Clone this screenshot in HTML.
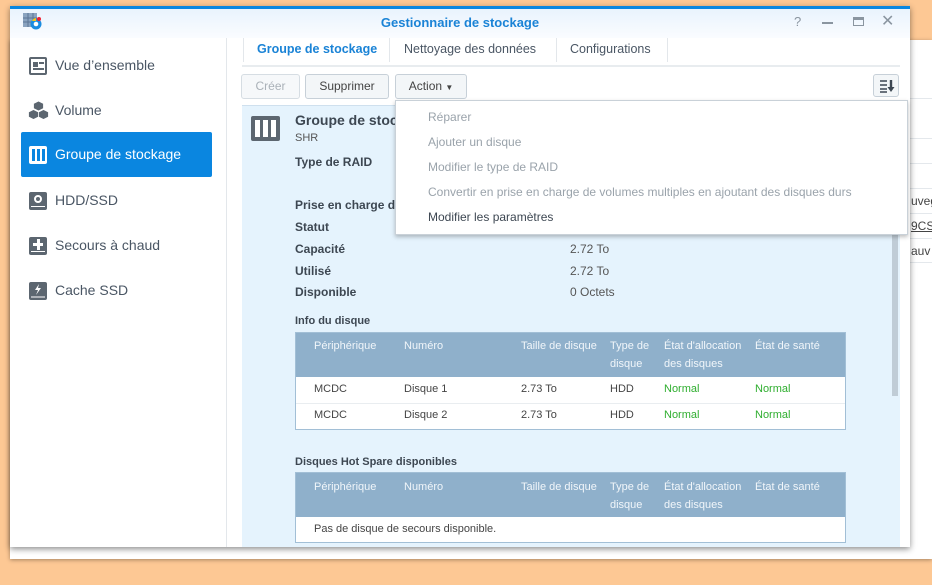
<!DOCTYPE html>
<html><head><meta charset="utf-8"><style>
*{box-sizing:border-box;margin:0;padding:0}
body{width:932px;height:585px;background:#fdc894;position:relative;overflow:hidden;font-family:"Liberation Sans",sans-serif;font-size:12px;color:#333}
.abs{position:absolute;white-space:nowrap}
#back{left:10px;top:40px;width:922px;height:519px;background:#fff;box-shadow:0 1px 4px rgba(0,0,0,.35)}
#win{left:10px;top:6px;width:900px;height:541px;background:#fff;box-shadow:0 2px 6px rgba(0,0,0,.45)}
#title{left:0;top:0;width:900px;height:32px;background:linear-gradient(#e9f3fd,#fafcff);border-top:3px solid #0a86e0}
.nav{left:11px;width:191px;height:45px;font-size:14px;color:#4a5664;line-height:45px;padding-left:34px}
.nav .ic{position:absolute;left:8px;top:14px;width:18px;height:18px;background:#5c6670;border-radius:2px}
.lbl{font-weight:bold;color:#3d4752;font-size:12px}
.val{color:#555;font-size:12px}
.tb{background:#fff;border:1px solid #a2bfd6}
.th{background:#8fb0cb;color:#f1f6fa}
.dd{color:#9aa3ab;font-size:12px}
.hd{color:#f1f6fa;font-size:11px;line-height:18px}
</style></head><body>
<div id="back" class="abs">
 <div class="abs" style="left:900px;top:58px;width:22px;height:1px;background:#e4e8ec"></div>
 <div class="abs" style="left:900px;top:98px;width:22px;height:1px;background:#e4e8ec"></div>
 <div class="abs" style="left:900px;top:123px;width:22px;height:1px;background:#e4e8ec"></div>
 <div class="abs" style="left:900px;top:148px;width:22px;height:1px;background:#e4e8ec"></div>
 <div class="abs" style="left:900px;top:173px;width:22px;height:1px;background:#e4e8ec"></div>
 <div class="abs" style="left:900px;top:198px;width:22px;height:1px;background:#e4e8ec"></div>
 <div class="abs" style="left:900px;top:222px;width:22px;height:1px;background:#e4e8ec"></div>
 <div class="abs" style="left:901px;top:154px;font-size:12px;color:#444">uveg</div>
 <div class="abs" style="left:901px;top:179px;font-size:12px;color:#444;text-decoration:underline">9CS</div>
 <div class="abs" style="left:901px;top:204px;font-size:12px;color:#444">auv</div>
</div>
<div id="win" class="abs">
 <div id="title" class="abs"></div>
 <svg class="abs" style="left:12px;top:5px" width="22" height="20"><rect x="1" y="2" width="14" height="14" fill="#8aa3bf"/><path d="M1 7h14M1 11h14M6 2v14M11 2v14" stroke="#5b7594" stroke-width="1"/><circle cx="14" cy="13" r="5.5" fill="#1a8ce0"/><circle cx="14" cy="13" r="2.3" fill="#fff"/><path d="M10 10a5 5 0 0 1 4-3v3z" fill="#f5c518"/><circle cx="17" cy="8" r="2" fill="#e23"/></svg>
 <div class="abs" style="left:0;width:900px;top:9px;text-align:center;font-weight:bold;color:#1a83d6;font-size:13px">Gestionnaire de stockage</div>
 <div class="abs" style="left:784px;top:8px;color:#8a95a0;font-size:13px">?</div>
 <div class="abs" style="left:812px;top:16px;width:11px;height:2px;background:#8a95a0"></div>
 <div class="abs" style="left:843px;top:11px;width:11px;height:9px;border:1.5px solid #8a95a0;border-top-width:3px"></div>
 <div class="abs" style="left:871px;top:5px;color:#8a95a0;font-size:16px">✕</div>
 <div class="abs" style="left:216px;top:32px;width:1px;height:509px;background:#e3e7eb"></div>
 <div class="abs nav" style="top:37px"><div class="ic" style="background:#fff;border:2px solid #5c6670"><div class="abs" style="left:2px;top:3px;width:5px;height:5px;background:#5c6670"></div><div class="abs" style="left:8px;top:3px;width:5px;height:2px;background:#5c6670"></div><div class="abs" style="left:2px;top:9px;width:11px;height:2px;background:#5c6670"></div></div>Vue d’ensemble</div>
 <div class="abs nav" style="top:82px"><svg class="abs" style="left:7px;top:12px" width="21" height="21"><path d="M10.5 1l5 2.5v5l-5 2.5-5-2.5v-5z M5.5 9.5l5 2.5v5l-5 2.5-5-2.5v-5z M15.5 9.5l5 2.5v5l-5 2.5-5-2.5v-5z" fill="#5c6670" stroke="#fff" stroke-width=".8"/></svg>Volume</div>
 <div class="abs nav" style="top:126px;background:#0a86e0;color:#fff;border-radius:2px"><div class="ic" style="background:#fff"><div class="abs" style="left:3px;top:3px;width:3px;height:12px;background:#0a86e0"></div><div class="abs" style="left:8px;top:3px;width:3px;height:12px;background:#0a86e0"></div><div class="abs" style="left:13px;top:3px;width:3px;height:12px;background:#0a86e0"></div></div>Groupe de stockage</div>
 <div class="abs nav" style="top:172px"><div class="ic"><div class="abs" style="left:5px;top:3px;width:8px;height:8px;border-radius:50%;border:2px solid #fff"></div><div class="abs" style="left:2px;top:14px;width:14px;height:1px;background:#fff"></div></div>HDD/SSD</div>
 <div class="abs nav" style="top:217px"><div class="ic"><div class="abs" style="left:4px;top:6px;width:10px;height:3px;background:#fff"></div><div class="abs" style="left:7.5px;top:2px;width:3px;height:11px;background:#fff"></div><div class="abs" style="left:2px;top:14px;width:14px;height:1px;background:#fff"></div></div>Secours à chaud</div>
 <div class="abs nav" style="top:262px"><div class="ic"><svg class="abs" width="18" height="18"><path d="M10 2l-4 6h3l-2 5 5-7h-3z" fill="#fff"/><path d="M2 15h14" stroke="#fff"/></svg></div>Cache SSD</div>

 <div class="abs" style="left:232px;top:32px;width:658px;height:29px;border-bottom:2px solid #e8ecef"></div>
 <div class="abs" style="left:233px;top:32px;width:1px;height:24px;background:#e3e7eb"></div>
 <div class="abs" style="left:247px;top:36px;font-weight:bold;color:#1a83d6;font-size:12.5px">Groupe de stockage</div>
 <div class="abs" style="left:379px;top:32px;width:1px;height:24px;background:#e3e7eb"></div>
 <div class="abs" style="left:394px;top:36px;color:#4a5664;font-size:12.5px">Nettoyage des données</div>
 <div class="abs" style="left:546px;top:32px;width:1px;height:24px;background:#e3e7eb"></div>
 <div class="abs" style="left:560px;top:36px;color:#4a5664;font-size:12.5px">Configurations</div>
 <div class="abs" style="left:657px;top:32px;width:1px;height:24px;background:#e3e7eb"></div>

 <div class="abs" style="left:231px;top:68px;width:59px;height:25px;border:1px solid #d6dde3;border-radius:3px;background:#f6f8fa;color:#aab1b8;text-align:center;line-height:23px">Créer</div>
 <div class="abs" style="left:295px;top:68px;width:84px;height:25px;border:1px solid #c7d0d8;border-radius:3px;background:#f3f6f8;color:#444;text-align:center;line-height:23px">Supprimer</div>
 <div class="abs" style="left:385px;top:68px;width:72px;height:25px;border:1px solid #c7d0d8;border-radius:3px;background:#f3f6f8;color:#444;text-align:center;line-height:23px">Action <span style="font-size:8px">▼</span></div>
 <div class="abs" style="left:863px;top:68px;width:26px;height:23px;border:1px solid #c7d0d8;border-radius:3px;background:#f3f6f8">
  <svg class="abs" style="left:5px;top:4px" width="16" height="14"><path d="M1 2h7M1 6h7M1 10h7M1 13h7" stroke="#3d4752" stroke-width="1.6"/><path d="M12 1v8" stroke="#3d4752" stroke-width="2.4"/><path d="M8.5 8h7l-3.5 5z" fill="#3d4752"/></svg></div>

 <div class="abs" style="left:232px;top:99px;width:658px;height:442px;background:#e5f3fd;border-top:1px solid #cfe0ee"></div>
 <div class="abs" style="left:882px;top:96px;width:6px;height:294px;background:#c0ccd6"></div>
 <div class="abs" style="left:241px;top:110px;width:29px;height:25px;background:#5c6670;border-radius:2px">
  <div class="abs" style="left:4px;top:4px;width:5px;height:17px;background:#fff"></div><div class="abs" style="left:12px;top:4px;width:5px;height:17px;background:#fff"></div><div class="abs" style="left:20px;top:4px;width:5px;height:17px;background:#fff"></div></div>
 <div class="abs" style="left:285px;top:106px;font-weight:bold;font-size:14px;color:#3d4752">Groupe de stockage</div>
 <div class="abs val" style="left:285px;top:126px;font-size:11px">SHR</div>
 <div class="abs lbl" style="left:285px;top:149px">Type de RAID</div>
 <div class="abs lbl" style="left:285px;top:192px">Prise en charge de volumes multiples</div>
 <div class="abs lbl" style="left:285px;top:214px">Statut</div>
 <div class="abs lbl" style="left:285px;top:236px">Capacité</div><div class="abs val" style="left:560px;top:236px">2.72 To</div>
 <div class="abs lbl" style="left:285px;top:258px">Utilisé</div><div class="abs val" style="left:560px;top:258px">2.72 To</div>
 <div class="abs lbl" style="left:285px;top:279px">Disponible</div><div class="abs val" style="left:560px;top:279px">0 Octets</div>
 <div class="abs lbl" style="left:285px;top:309px;font-size:11px">Info du disque</div>
 <div class="abs tb" style="left:285px;top:326px;width:551px;height:98px">
  <div class="abs th" style="left:0;top:0;width:549px;height:44px"></div>
  <div class="abs" style="left:0;top:70px;width:549px;height:1px;background:#e9edf0"></div>
 </div>
 <div class="abs hd" style="left:304px;top:331px">Périphérique</div><div class="abs hd" style="left:394px;top:331px">Numéro</div><div class="abs hd" style="left:511px;top:331px">Taille de disque</div>
 <div class="abs hd" style="left:600px;top:331px">Type de<br>disque</div>
 <div class="abs hd" style="left:654px;top:331px">État d'allocation<br>des disques</div>
 <div class="abs hd" style="left:745px;top:331px">État de santé</div>
 <div class="abs" style="left:0;top:0;font-size:11px;color:#444">
  <div class="abs" style="left:304px;top:377px">MCDC</div><div class="abs" style="left:394px;top:377px">Disque 1</div><div class="abs" style="left:511px;top:377px">2.73 To</div><div class="abs" style="left:600px;top:377px">HDD</div><div class="abs" style="left:654px;top:377px;color:#2fae2f">Normal</div><div class="abs" style="left:745px;top:377px;color:#2fae2f">Normal</div>
  <div class="abs" style="left:304px;top:403px">MCDC</div><div class="abs" style="left:394px;top:403px">Disque 2</div><div class="abs" style="left:511px;top:403px">2.73 To</div><div class="abs" style="left:600px;top:403px">HDD</div><div class="abs" style="left:654px;top:403px;color:#2fae2f">Normal</div><div class="abs" style="left:745px;top:403px;color:#2fae2f">Normal</div>
 </div>
 <div class="abs lbl" style="left:285px;top:450px;font-size:11px">Disques Hot Spare disponibles</div>
 <div class="abs tb" style="left:285px;top:466px;width:551px;height:71px">
  <div class="abs th" style="left:0;top:0;width:549px;height:44px"></div>
 </div>
 <div class="abs hd" style="left:304px;top:472px">Périphérique</div><div class="abs hd" style="left:394px;top:472px">Numéro</div><div class="abs hd" style="left:511px;top:472px">Taille de disque</div>
 <div class="abs hd" style="left:600px;top:472px">Type de<br>disque</div>
 <div class="abs hd" style="left:654px;top:472px">État d'allocation<br>des disques</div>
 <div class="abs hd" style="left:745px;top:472px">État de santé</div>
 <div class="abs" style="left:304px;top:517px;font-size:11px;color:#444">Pas de disque de secours disponible.</div>

 <div class="abs" style="left:385px;top:94px;width:513px;height:135px;background:#fff;border:1px solid #c9d1d8;box-shadow:0 2px 4px rgba(0,0,0,.25)">
  <div class="abs dd" style="left:32px;top:9px">Réparer</div>
  <div class="abs dd" style="left:32px;top:34px">Ajouter un disque</div>
  <div class="abs dd" style="left:32px;top:59px">Modifier le type de RAID</div>
  <div class="abs dd" style="left:32px;top:84px">Convertir en prise en charge de volumes multiples en ajoutant des disques durs</div>
  <div class="abs" style="left:32px;top:109px;color:#3d4752">Modifier les paramètres</div>
 </div>
</div>
</body></html>
